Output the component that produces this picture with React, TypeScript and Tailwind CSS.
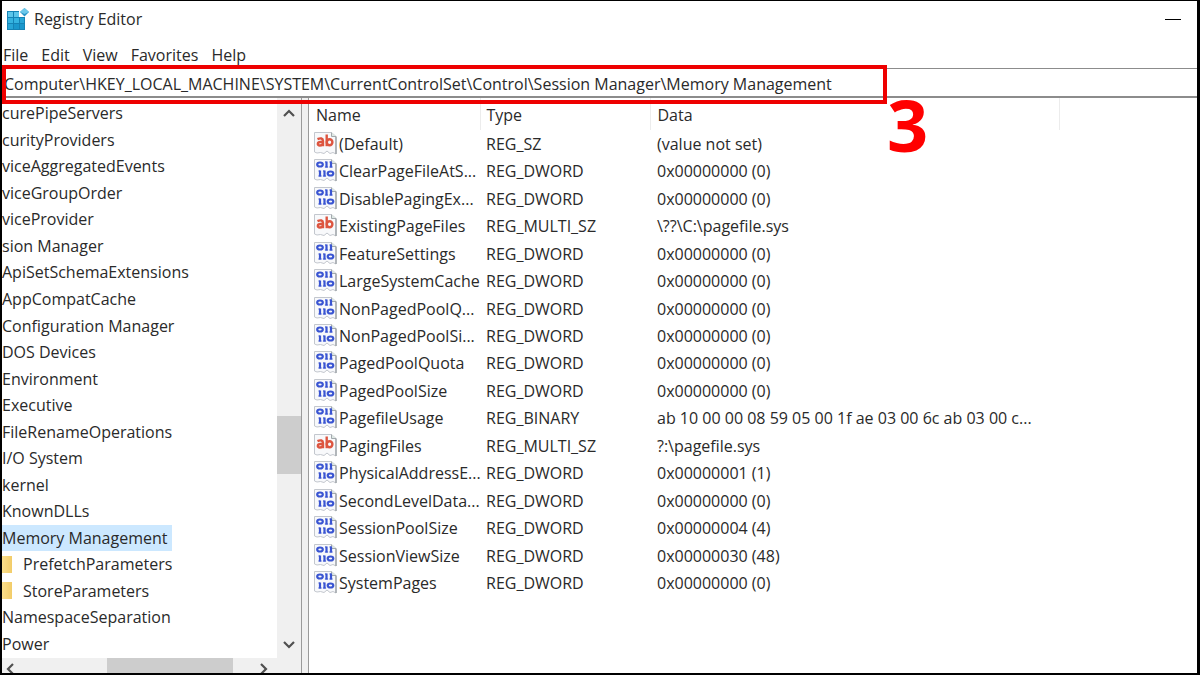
import type { ReactNode } from "react";

type ValueType = "REG_SZ" | "REG_DWORD" | "REG_MULTI_SZ" | "REG_BINARY";

type RegistryValue = {
  name: string;
  type: ValueType;
  data: string;
};

type TreeKey = {
  label: string;
  child?: boolean;
  selected?: boolean;
};

const menus = ["File", "Edit", "View", "Favorites", "Help"];

const path =
  "Computer\\HKEY_LOCAL_MACHINE\\SYSTEM\\CurrentControlSet\\Control\\Session Manager\\Memory Management";

const treeKeys: TreeKey[] = [
  { label: "curePipeServers" },
  { label: "curityProviders" },
  { label: "viceAggregatedEvents" },
  { label: "viceGroupOrder" },
  { label: "viceProvider" },
  { label: "sion Manager" },
  { label: "ApiSetSchemaExtensions" },
  { label: "AppCompatCache" },
  { label: "Configuration Manager" },
  { label: "DOS Devices" },
  { label: "Environment" },
  { label: "Executive" },
  { label: "FileRenameOperations" },
  { label: "I/O System" },
  { label: "kernel" },
  { label: "KnownDLLs" },
  { label: "Memory Management", selected: true },
  { label: "PrefetchParameters", child: true },
  { label: "StoreParameters", child: true },
  { label: "NamespaceSeparation" },
  { label: "Power" },
];

const values: RegistryValue[] = [
  { name: "(Default)", type: "REG_SZ", data: "(value not set)" },
  { name: "ClearPageFileAtS...", type: "REG_DWORD", data: "0x00000000 (0)" },
  { name: "DisablePagingEx...", type: "REG_DWORD", data: "0x00000000 (0)" },
  { name: "ExistingPageFiles", type: "REG_MULTI_SZ", data: "\\??\\C:\\pagefile.sys" },
  { name: "FeatureSettings", type: "REG_DWORD", data: "0x00000000 (0)" },
  { name: "LargeSystemCache", type: "REG_DWORD", data: "0x00000000 (0)" },
  { name: "NonPagedPoolQ...", type: "REG_DWORD", data: "0x00000000 (0)" },
  { name: "NonPagedPoolSi...", type: "REG_DWORD", data: "0x00000000 (0)" },
  { name: "PagedPoolQuota", type: "REG_DWORD", data: "0x00000000 (0)" },
  { name: "PagedPoolSize", type: "REG_DWORD", data: "0x00000000 (0)" },
  {
    name: "PagefileUsage",
    type: "REG_BINARY",
    data: "ab 10 00 00 08 59 05 00 1f ae 03 00 6c ab 03 00 c...",
  },
  { name: "PagingFiles", type: "REG_MULTI_SZ", data: "?:\\pagefile.sys" },
  { name: "PhysicalAddressE...", type: "REG_DWORD", data: "0x00000001 (1)" },
  { name: "SecondLevelData...", type: "REG_DWORD", data: "0x00000000 (0)" },
  { name: "SessionPoolSize", type: "REG_DWORD", data: "0x00000004 (4)" },
  { name: "SessionViewSize", type: "REG_DWORD", data: "0x00000030 (48)" },
  { name: "SystemPages", type: "REG_DWORD", data: "0x00000000 (0)" },
];

function AppIcon() {
  return (
    <svg viewBox="0 0 24 24" className="size-6 shrink-0" aria-hidden="true">
      <path d="M1 4h12v6h6v13H1z" fill="#1583b5" />
      <path d="M2 5h5v5H2zM8 5h5v5H8z" fill="#5cc6ea" />
      <path d="M2 11h5v5H2zM8 11h5v5H8z" fill="#35b3e0" />
      <path d="M14 11h4v5h-4zM2 17h5v5H2z" fill="#27a5d6" />
      <path d="M8 17h5v5H8zM14 17h4v5h-4z" fill="#1a97cc" />
      <path d="M18.500 1l4.500 4-4.500 4.500L14 5z" fill="#2796c9" />
      <path d="M18.500 1l4.500 4-4.500 2L14 5z" fill="#6cc8ea" />
    </svg>
  );
}

function Page({ children }: { children: ReactNode }) {
  return (
    <svg viewBox="0 0 24 24" className="size-6 shrink-0" aria-hidden="true">
      <path
        d="M.5 .5h17l4.500 4V22l-3-1.500-3 1-3-2.500-3 2.500-3.500-1L3 21l-2.500-1z"
        fill="#f8f9fb"
        stroke="#c3c7ce"
      />
      <path d="M17.500 .5v4H22" fill="#dfe9e4" stroke="#a3a9ad" />
      <path d="M22 4.500V22" stroke="#9a9fa4" strokeWidth="1.300" />
      {children}
    </svg>
  );
}

function StringIcon() {
  return (
    <Page>
      <g fill="none" stroke="#dd5540" strokeWidth="2.400">
        <path d="M3.500 7.200C6.500 5.800 9 6.200 9 9v5.200M9 10H6.500c-3.500 0-3.300 3.500-.8 3.500 1.800 0 3.300-1 3.300-2.800" />
        <path d="M12.700 2.500v11.700" />
        <ellipse cx="15.600" cy="10.300" rx="2.800" ry="3" />
      </g>
    </Page>
  );
}

function BinaryIcon() {
  return (
    <Page>
      <g fill="none" stroke="#3a55d2" strokeWidth="2.200">
        <ellipse cx="6" cy="5.500" rx="2.800" ry="2" />
        <path d="M12.500 2.500v6M17 2.500v6" />
        <path d="M6 11.500v6M10.500 11.500v6" />
        <ellipse cx="16.500" cy="14.500" rx="2.800" ry="2" />
      </g>
      <path
        d="M11 3h1.500M15.500 3H17M10.900 8h3.200M15.400 8h3.200M4.500 12H6M9 12h1.500M4.400 17h3.200M8.900 17h3.200"
        stroke="#3a55d2"
      />
    </Page>
  );
}

function Chevron({ d }: { d: string }) {
  return (
    <svg viewBox="0 0 12 12" className="size-3" aria-hidden="true">
      <path d={d} fill="none" stroke="#505050" strokeWidth="2.200" />
    </svg>
  );
}

function TreePane() {
  return (
    <nav className="flex w-[300px] shrink-0 flex-col border-r border-[#9a9a9a]">
      <div className="flex min-h-0 flex-1">
        <ul className="flex min-w-0 flex-1 flex-col pt-[2px] pb-px">
          {treeKeys.map((key) => (
            <li key={key.label} className="flex flex-1 items-center">
              {key.child && (
                <span className="mr-1 h-[17px] w-[10px] bg-linear-to-r from-[#fbdf8c] to-[#f2cc68]" />
              )}
              <button
                className={
                  key.selected
                    ? "h-full bg-[#cce8ff] pr-1 whitespace-nowrap"
                    : key.child
                      ? "pl-[7px] whitespace-nowrap"
                      : "whitespace-nowrap"
                }
              >
                {key.label}
              </button>
            </li>
          ))}
        </ul>
        <div className="flex w-6 flex-col items-center bg-[#f0f0f0] py-2">
          <button aria-label="Scroll up">
            <Chevron d="M1 10l5-5 5 5" />
          </button>
          <div className="flex w-full flex-1 flex-col">
            <div className="grow-[300]" />
            <div className="h-[58px] bg-[#cdcdcd]" />
            <div className="grow-[165]" />
          </div>
          <button aria-label="Scroll down">
            <Chevron d="M1 4l5 5 5-5" />
          </button>
        </div>
      </div>
      <div className="flex h-[15px] items-end overflow-hidden bg-[#f0f0f0] pr-8 pl-[2px]">
        <button aria-label="Scroll left">
          <Chevron d="M9 3L4 8l5 5" />
        </button>
        <div className="flex h-full flex-1">
          <div className="grow-[92]" />
          <div className="w-[126px] bg-[#cdcdcd]" />
          <div className="grow-[24]" />
        </div>
        <button aria-label="Scroll right">
          <Chevron d="M4 3l5 5-5 5" />
        </button>
      </div>
    </nav>
  );
}

function ValueTable() {
  return (
    <table className="h-[499px] w-[751px] table-fixed text-left">
      <thead>
        <tr className="h-8">
          <th className="w-[171px] border-r border-[#ececec] pt-px pl-[7px] font-normal">Name</th>
          <th className="w-[170px] border-r border-[#ececec] pt-px pl-[6px] font-normal">Type</th>
          <th className="border-r border-[#ececec] pt-px pl-[7px] font-normal">Data</th>
        </tr>
      </thead>
      <tbody>
        {values.map((value) => (
          <tr key={value.name}>
            <td className="pl-[5px]">
              <div className="flex items-center gap-px whitespace-nowrap">
                {value.type === "REG_SZ" || value.type === "REG_MULTI_SZ" ? (
                  <StringIcon />
                ) : (
                  <BinaryIcon />
                )}
                {value.name}
              </div>
            </td>
            <td className="pl-[6px]">{value.type}</td>
            <td className="pl-[7px] whitespace-nowrap">{value.data}</td>
          </tr>
        ))}
      </tbody>
    </table>
  );
}

export default function App() {
  return (
    <div className="flex h-screen flex-col overflow-hidden border-t border-r-[3px] border-b-2 border-l-2 border-black bg-white font-['Open_Sans',sans-serif] text-base leading-5 text-[#2a2a2a]">
      <header className="flex h-9 items-center justify-between pr-4 pl-1">
        <div className="flex items-center gap-1">
          <AppIcon />
          <h1>Registry Editor</h1>
        </div>
        <button aria-label="Minimize" className="flex h-6 w-4 items-center">
          <span className="h-px w-full bg-black" />
        </button>
      </header>

      <div className="flex h-[31px] items-center gap-[13px] pt-1 pl-px">
        {menus.map((menu) => (
          <button key={menu}>{menu}</button>
        ))}
      </div>

      <div className="relative">
        <input
          aria-label="Registry path"
          defaultValue={path}
          className="block h-[30px] w-full border-t border-b-2 border-[#8c8c8c] pt-[2px] pl-[2px] outline-none"
        />
        {/* step marker around the path */}
        <div className="pointer-events-none absolute -top-[3px] left-0 h-[39px] w-[885px] border-4 border-[#ee0000]" />
        <div className="pointer-events-none absolute top-5 left-[885px] text-[72px] leading-[72px] font-bold text-[#ff0000]">
          3
        </div>
      </div>

      <main className="flex min-h-0 flex-1">
        <TreePane />
        <div className="w-[7px] shrink-0 border-r border-[#9a9a9a] bg-[#f0f0f0]" />
        <ValueTable />
      </main>
    </div>
  );
}
